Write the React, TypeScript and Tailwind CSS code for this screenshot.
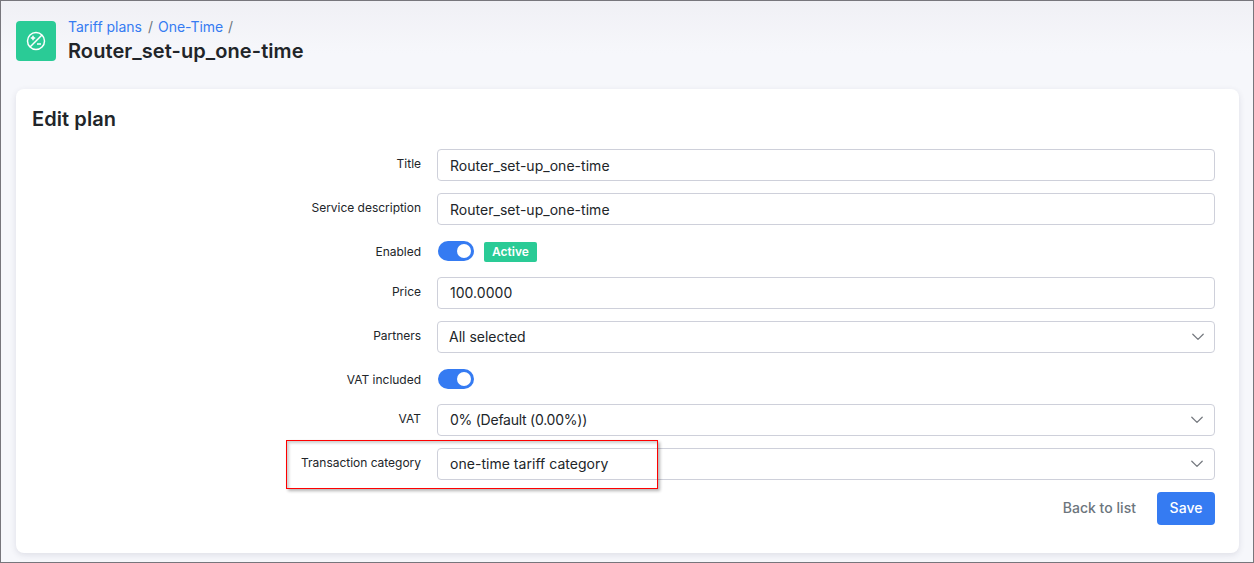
import type { ReactNode } from "react";

function Row({ label, children, className = "h-8" }: { label: string; children: ReactNode; className?: string }) {
  return (
    <div className={`flex ${className}`}>
      <label className="w-[389px] shrink-0 pt-[6px] text-right text-[12px] leading-[17px] tracking-[-0.02px]">{label}</label>
      <div className="ml-4 flex-1">{children}</div>
    </div>
  );
}

function TextField({ value, className = "pt-px" }: { value: string; className?: string }) {
  return (
    <div className={`flex h-8 items-center rounded-[4px] border border-[#ced0da] bg-white px-3 text-[14px] tracking-[0.03px] ${className}`}>{value}</div>
  );
}

function SelectField({ value, className = "pl-3 pr-[11px]", textClass = "" }: { value: string; className?: string; textClass?: string }) {
  return (
    <div className={`flex h-8 items-center justify-between rounded-[4px] border border-[#ced0da] bg-white text-[14px] ${className}`}>
      <span className={`pb-[2px] ${textClass}`}>{value}</span>
      <svg width="12" height="8" viewBox="0 0 12 8" fill="none" stroke="#75797f" strokeWidth="1.25" strokeLinecap="round" strokeLinejoin="round">
        <path d="M.8 1.2 6 6.4l5.2-5.2" />
      </svg>
    </div>
  );
}

function Toggle() {
  return (
    <div className="ml-px flex h-5 w-9 items-center justify-end rounded-full bg-[#357bf2] pr-[3px]">
      <div className="size-[14px] rounded-full bg-white" />
    </div>
  );
}

export default function App() {
  return (
    <div className="h-[563px] w-full border border-[#77767c] bg-[#f6f7fb] bg-[linear-gradient(to_bottom,#f0f0f5_0px,#f6f7fb_52px)] px-[15px] pt-[16px] font-['Inter',sans-serif] text-[#212529]">
      <header className="flex h-[72px] items-start">
        <div className="mt-1 flex size-10 items-center justify-center rounded-[4px] bg-[#2acb96]">
          <svg width="20" height="20" viewBox="0 0 20 20" fill="none" stroke="white" strokeWidth="1.5">
            <circle cx="10" cy="10" r="8.5" />
            <path d="M4 16 16 4M7 4.8v4.4M4.8 7h4.4M11 13h4" />
          </svg>
        </div>
        <div className="ml-3">
          <nav className="flex h-5 items-center text-[14px] leading-5 text-[#357bf2]">
            <a>Tariff plans</a>
            <span className="ml-[6px] mr-[5px] text-[#6c757d]">/</span>
            <a className="tracking-[-0.05px]">One-Time</a>
            <span className="ml-[5px] text-[#6c757d]">/</span>
          </nav>
          <h1 className="text-[20px] font-semibold leading-7 tracking-[0.08px]">Router_set-up_one-time</h1>
        </div>
      </header>

      <main className="mr-[-1px] h-[464px] w-[1223px] rounded-[8px] bg-white pl-4 pr-6 pt-4 shadow-[0_2px_6px_rgba(50,50,80,0.12)]">
        <h2 className="h-11 text-[20px] font-semibold leading-7 tracking-[0.08px]">Edit plan</h2>
        <form className="relative flex flex-col gap-3">
          <Row label="Title"><TextField value="Router_set-up_one-time" /></Row>
          <Row label="Service description"><TextField value="Router_set-up_one-time" /></Row>
          <Row label="Enabled" className="h-7">
            <div className="flex items-start pt-1">
              <Toggle />
              <span className="ml-[10px] mt-px flex h-5 items-center rounded-[2px] bg-[#2acb96] px-2 text-[12px] font-semibold text-white">Active</span>
            </div>
          </Row>
          <Row label="Price"><TextField value="100.0000" className="pb-[2px]" /></Row>
          <Row label="Partners"><SelectField value="All selected" className="pl-[11px] pr-[10px]" /></Row>
          <Row label="VAT included" className="h-[27px]"><div className="pt-1"><Toggle /></div></Row>
          <Row label="VAT"><SelectField value="0% (Default (0.00%))" textClass="tracking-[-0.25px]" /></Row>
          <Row label="Transaction category"><SelectField value="one-time tariff category" textClass="tracking-[0.03px]" /></Row>
          <div className="flex h-[33px] items-center justify-end gap-[21px] text-[14px] font-medium">
            <a className="pb-[2px] tracking-[0.03px] text-[#6c757d]">Back to list</a>
            <button type="button" className="h-[33px] w-[58px] rounded-[4px] bg-[#357bf2] pb-[2px] font-medium text-white">Save</button>
          </div>
          <div className="pointer-events-none absolute left-[254px] top-[291px] h-[49px] w-[372px] border border-[#ff0000] shadow-[2px_2px_3px_rgba(0,0,0,0.3),inset_2px_2px_3px_rgba(0,0,0,0.2)]" />
        </form>
      </main>
    </div>
  );
}
